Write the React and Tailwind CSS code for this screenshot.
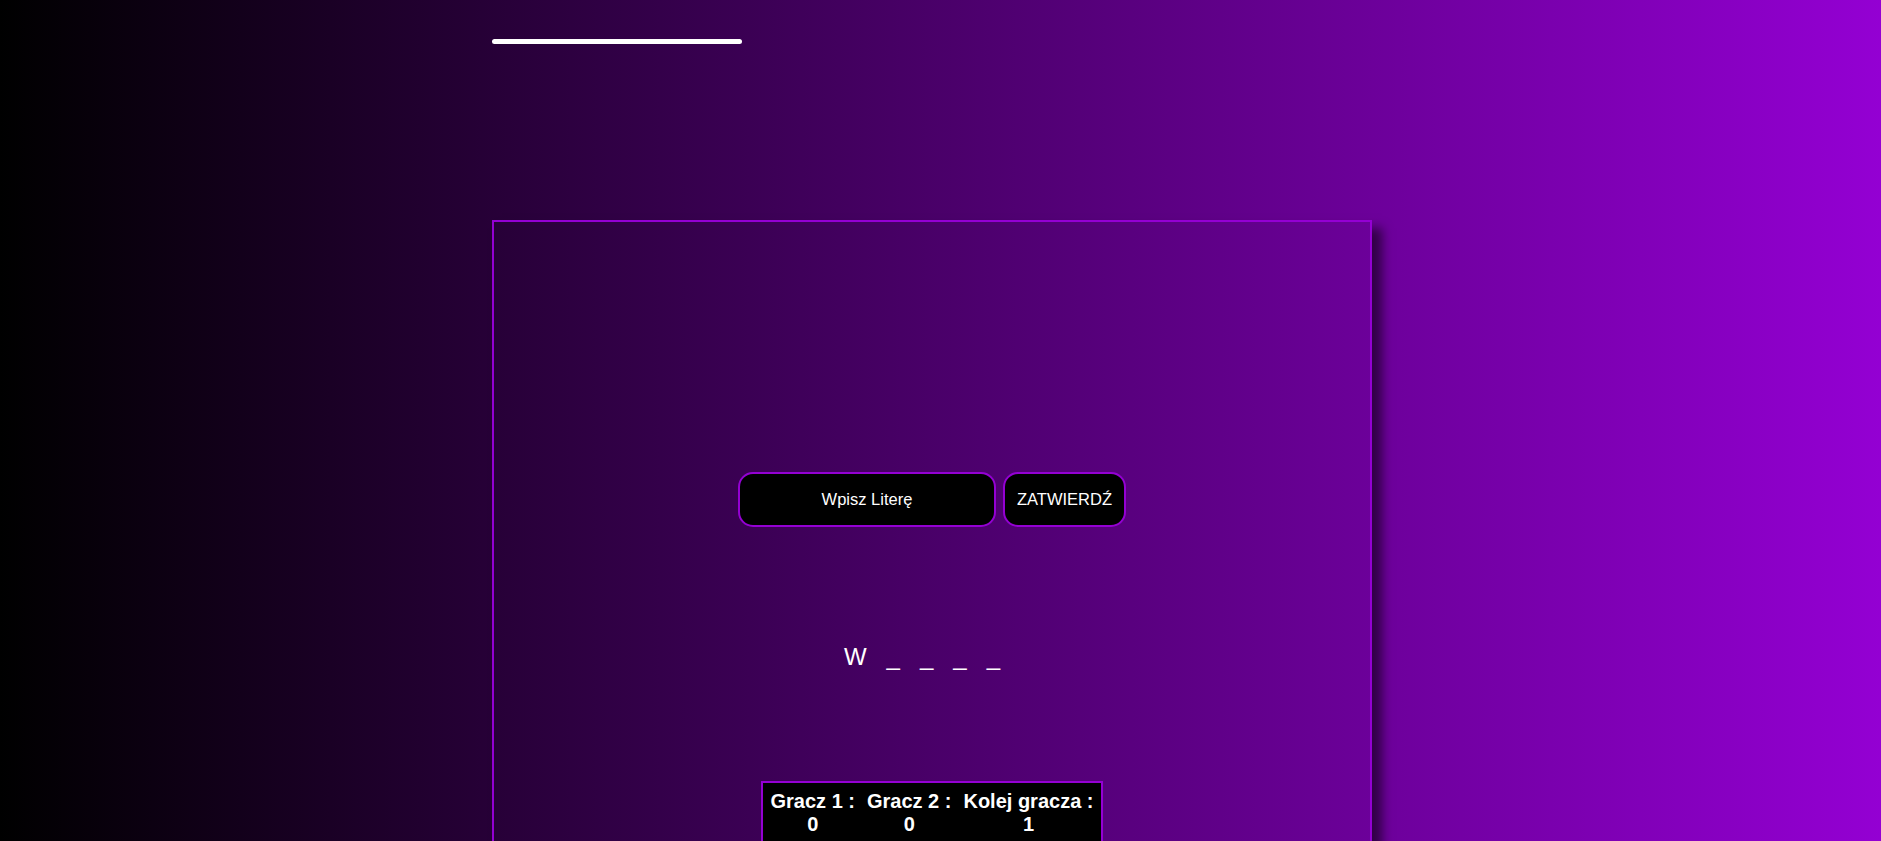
import { useState } from "react";

const App = () => {
  const [letter, setLetter] = useState("");
  const word = ["W", "_", "_", "_", "_"];

  return (
    <div
      className="min-h-screen w-full bg-[linear-gradient(to_right,#000000,#9400d3)] overflow-hidden"
      style={{ fontFamily: '"Liberation Sans", Arial, sans-serif' }}
    >
      {/* top line */}
      <div className="ml-[492px] pt-[39px]">
        <div className="w-[250px] h-[5px] rounded-full bg-white" />
      </div>

      {/* game board */}
      <div className="ml-[492px] mt-[176px] w-[880px] h-[880px] border-2 border-[#9400d3] shadow-[10px_8px_10px_rgba(0,0,0,0.55)] flex flex-col items-center">
        <div className="mt-[250px] flex gap-[7px]">
          <input
            value={letter}
            onChange={(e) => setLetter(e.target.value)}
            placeholder="Wpisz Literę"
            className="w-[258px] h-[55px] rounded-[15px] border-2 border-[#9400d3] bg-black text-white text-[16.5px] text-center outline-none placeholder:text-white"
          />
          <button className="w-[123px] h-[55px] rounded-[15px] border-2 border-[#9400d3] bg-black text-white text-[16.5px]">
            ZATWIERDŹ
          </button>
        </div>

        <div className="mt-[112px] flex text-white text-[24px] leading-normal">
          {word.map((ch, i) => (
            <span key={i} className="mr-[20px]">
              {ch}
            </span>
          ))}
        </div>

        <div className="mt-[106px] border-2 border-[#9400d3] bg-black pt-[7px] pb-[20px] px-px flex text-white font-bold text-[20px] leading-[23px]">
          <div className="px-[6px] text-center">
            <div>Gracz 1 :</div>
            <div>0</div>
          </div>
          <div className="px-[6px] text-center">
            <div>Gracz 2 :</div>
            <div>0</div>
          </div>
          <div className="px-[6px] text-center">
            <div>Kolej gracza :</div>
            <div>1</div>
          </div>
        </div>
      </div>
    </div>
  );
};

export default App;
